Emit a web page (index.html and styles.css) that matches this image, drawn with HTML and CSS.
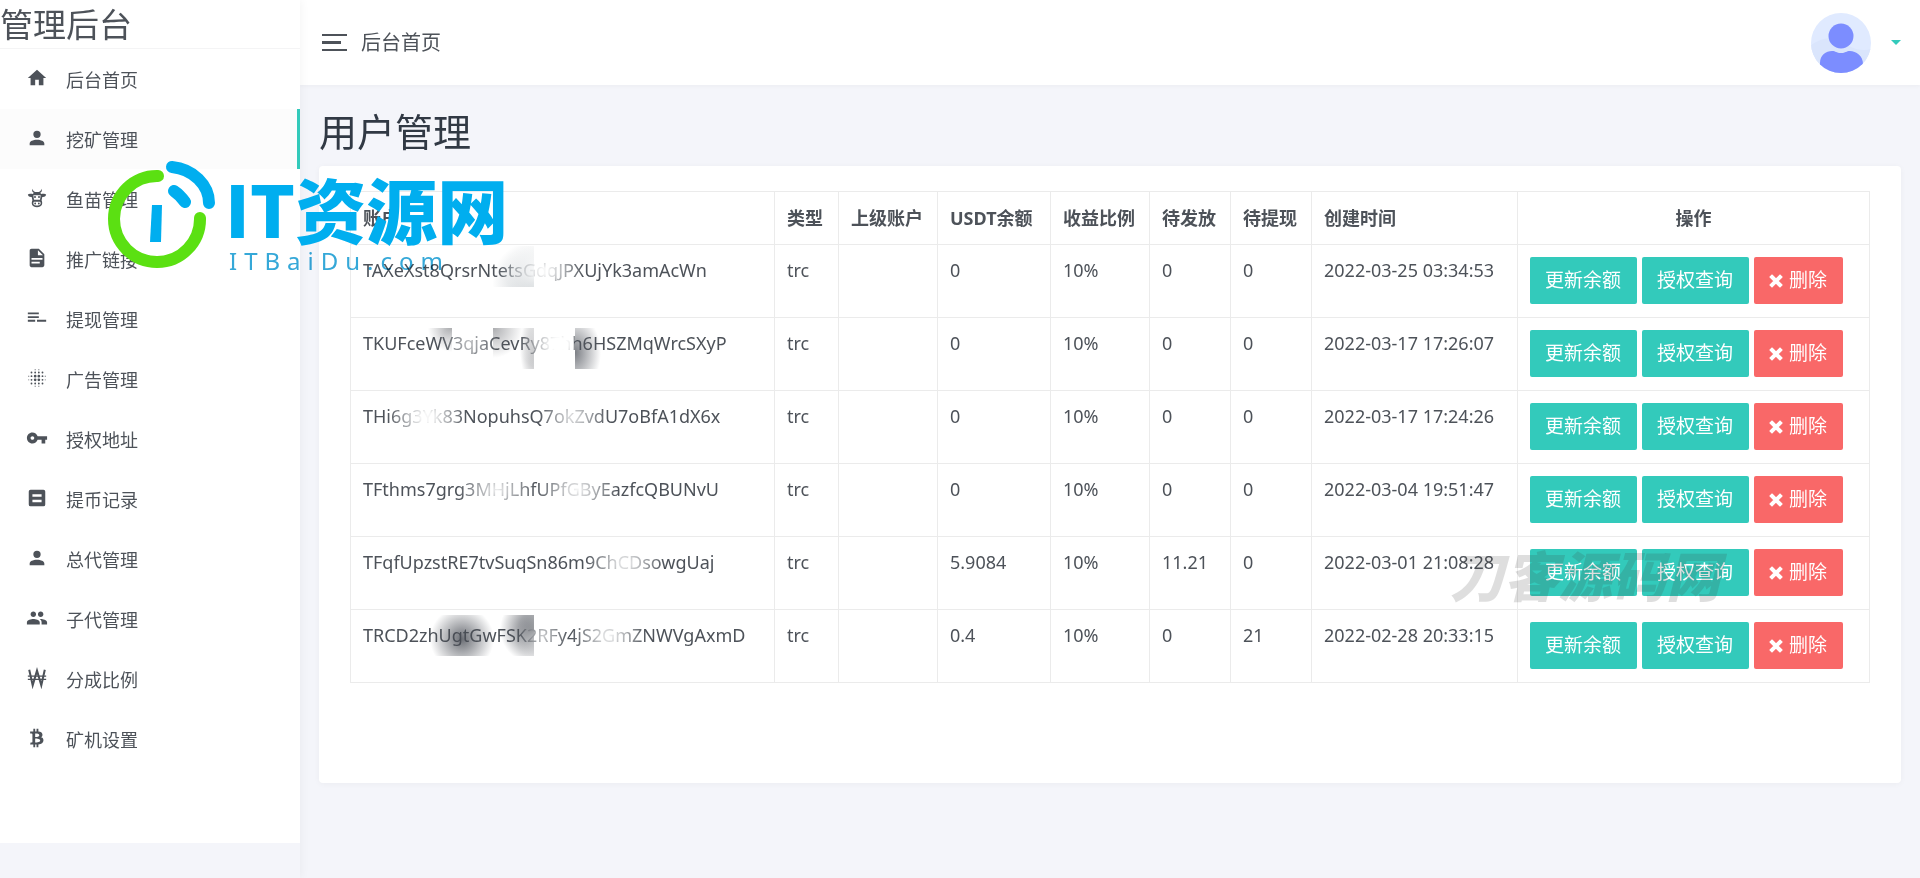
FILE: index.html
```html
<!DOCTYPE html>
<html lang="zh-CN">
<head>
<meta charset="utf-8">
<title>管理后台</title>
<link rel="stylesheet" href="styles.css">
</head>
<body>
<div class="layout">
  <aside class="sidebar">
    <div class="brand">管理后台</div>
    <nav class="menu">
      <a href="#" class="menu-item"><svg class="icon" viewBox="0 0 24 24"><path d="M10 20V14H14V20H19V12H22L12 3 2 12H5V20Z"/></svg>后台首页</a>
      <a href="#" class="menu-item active"><svg class="icon" viewBox="0 0 24 24"><path d="M12 4A4 4 0 0 1 16 8 4 4 0 0 1 12 12 4 4 0 0 1 8 8 4 4 0 0 1 12 4M12 14C16.42 14 20 15.79 20 18V20H4V18C4 15.79 7.58 14 12 14Z"/></svg>挖矿管理</a>
      <a href="#" class="menu-item"><svg class="icon" viewBox="0 0 24 24"><path fill-rule="evenodd" d="M7.200 2C6.200 4 6.800 5.600 8.400 6.400L7.600 7.600C5.400 7 3 7.200 2 8.200 2.600 10.600 4.400 11 6.200 10.800L7 14.500C5.400 18 6.400 22 12 22S18.600 18 17 14.500L17.800 10.800C19.600 11 21.400 10.600 22 8.200 21 7.200 18.600 7 16.400 7.600L15.600 6.400C17.200 5.600 17.800 4 16.800 2 16.600 4 15.600 4.800 14 5.400H10C8.400 4.800 7.400 4 7.200 2ZM8 9H16L15.300 14H8.700ZM8.600 16H15.400C17 18 15.500 20.300 12 20.300S7 18 8.600 16Z"/><circle cx="9.800" cy="11" r="1.100"/><circle cx="14.200" cy="11" r="1.100"/><circle cx="10" cy="18" r="1"/><circle cx="14" cy="18" r="1"/></svg>鱼苗管理</a>
      <a href="#" class="menu-item"><svg class="icon" viewBox="0 0 24 24"><path d="M13 9H18.500L13 3.500V9M6 2H14L20 8V20A2 2 0 0 1 18 22H6C4.890 22 4 21.100 4 20V4C4 2.890 4.890 2 6 2M15 18V16H6V18H15M18 14V12H6V14H18Z"/></svg>推广链接</a>
      <a href="#" class="menu-item"><svg class="icon" viewBox="0 0 24 24"><path d="M2 6H14V8H2ZM2 10H14V12H2ZM2 14H10V16H2ZM12 14H22V16H12Z"/></svg>提现管理</a>
      <a href="#" class="menu-item"><svg class="icon" viewBox="0 0 24 24"><path d="M14 8.500a1.500 1.500 0 1 0 0 3 1.500 1.500 0 0 0 0-3m0 4a1.500 1.500 0 1 0 0 3 1.500 1.500 0 0 0 0-3m-4 4.500a1 1 0 1 0 0 2 1 1 0 0 0 0-2m-4-4a1 1 0 1 0 0 2 1 1 0 0 0 0-2m0-4a1 1 0 1 0 0 2 1 1 0 0 0 0-2m4-4a1 1 0 1 0 0 2 1 1 0 0 0 0-2m4 0a1 1 0 1 0 0 2 1 1 0 0 0 0-2m4 4a1 1 0 1 0 0 2 1 1 0 0 0 0-2m0 4a1 1 0 1 0 0 2 1 1 0 0 0 0-2m0 4a1 1 0 1 0 0 2 1 1 0 0 0 0-2m0-12a1 1 0 1 0 0 2 1 1 0 0 0 0-2m-4 12a1 1 0 1 0 0 2 1 1 0 0 0 0-2m-4-8.500a1.500 1.500 0 1 0 0 3 1.500 1.500 0 0 0 0-3m0 4a1.500 1.500 0 1 0 0 3 1.500 1.500 0 0 0 0-3M6 5a1 1 0 1 0 0 2 1 1 0 0 0 0-2m0 12a1 1 0 1 0 0 2 1 1 0 0 0 0-2"/><path d="M9.500 2.500h1v1h-1zM13.500 2.500h1v1h-1zM9.500 20.500h1v1h-1zM13.500 20.500h1v1h-1zM2.500 9.500h1v1h-1zM2.500 13.500h1v1h-1zM20.500 9.500h1v1h-1zM20.500 13.500h1v1h-1z"/></svg>广告管理</a>
      <a href="#" class="menu-item"><svg class="icon" viewBox="0 0 24 24"><path d="M12.650 10C11.830 7.670 9.610 6 7 6c-3.310 0-6 2.690-6 6s2.690 6 6 6c2.610 0 4.830-1.670 5.650-4H17v4h4v-4h2v-4H12.650zM7 14c-1.100 0-2-.9-2-2s.9-2 2-2 2 .9 2 2-.9 2-2 2z"/></svg>授权地址</a>
      <a href="#" class="menu-item"><svg class="icon" viewBox="0 0 24 24"><path fill-rule="evenodd" d="M5 3H19A2 2 0 0 1 21 5V19A2 2 0 0 1 19 21H5A2 2 0 0 1 3 19V5A2 2 0 0 1 5 3ZM7 8V10.500H17V8ZM7 14V16.500H17V14Z"/></svg>提币记录</a>
      <a href="#" class="menu-item"><svg class="icon" viewBox="0 0 24 24"><path d="M12 4A4 4 0 0 1 16 8 4 4 0 0 1 12 12 4 4 0 0 1 8 8 4 4 0 0 1 12 4M12 14C16.420 14 20 15.790 20 18V20H4V18C4 15.790 7.580 14 12 14Z"/></svg>总代管理</a>
      <a href="#" class="menu-item"><svg class="icon" viewBox="0 0 24 24"><path d="M16 11c1.660 0 2.990-1.340 2.990-3S17.660 5 16 5c-1.660 0-3 1.340-3 3s1.340 3 3 3zm-8 0c1.660 0 2.990-1.340 2.990-3S9.660 5 8 5C6.340 5 5 6.340 5 8s1.340 3 3 3zm0 2c-2.330 0-7 1.170-7 3.500V19h14v-2.500c0-2.330-4.670-3.500-7-3.500zm8 0c-.29 0-.62.020-.97.050 1.160.84 1.970 1.970 1.970 3.450V19h6v-2.500c0-2.330-4.670-3.500-7-3.500z"/></svg>子代管理</a>
      <a href="#" class="menu-item"><svg class="icon" viewBox="0 0 24 24"><g fill="none" stroke="currentColor"><path stroke-width="2.200" d="M3.500 3 7.300 20 12 4 16.700 20 20.500 3"/><path stroke-width="1.500" d="M2 10H22M2 13.500H22"/></g></svg>分成比例</a>
      <a href="#" class="menu-item"><svg class="icon" viewBox="0 0 24 24"><path d="M4.500 5H8V2H10V5H11.500V2H13.500V5C19 5 19 11 16 11.250 20 11 21 19 13.500 19V22H11.500V19H10V22H8V19H4.500L5 17H6A1 1 0 0 0 7 16V8A1 1 0 0 0 6 7H4.500V5M10 7V11C10 11 14.500 11.250 14.500 9 14.500 6.750 10 7 10 7M10 12.500V17C10 17 15.500 17 15.500 14.750 15.500 12.500 10 12.500 10 12.500Z"/></svg>矿机设置</a>
    </nav>
  </aside>

  <div class="page">
    <header class="topbar">
      <button class="toggle" type="button" aria-label="菜单"><span class="bar"></span><span class="bar short"></span><span class="bar"></span></button>
      <span class="crumb">后台首页</span>
      <button class="user" type="button" aria-label="用户">
        <svg class="avatar" viewBox="0 0 60 60"><defs><clipPath id="disc"><circle cx="30" cy="30" r="30"/></clipPath></defs><g clip-path="url(#disc)"><path fill="#e0eaff" d="M0 0H60V60H0Z"/><path fill="#dae5fc" d="M0 32C12 24 24 22 34 30 42 37 52 38 60 36V60H0Z"/><path fill="#7c8dff" d="M9 60V50C9 42 15 38 21 38 25 38 25 40 30 40S35 38 39 38C45 38 52 43 52 51V60Z"/></g><circle cx="30" cy="23" r="12.500" fill="#7c8dff"/></svg>
        <span class="caret"></span>
      </button>
    </header>

    <main class="content">
      <h1 class="title">用户管理</h1>
      <section class="card">
        <table class="users">
          <colgroup><col class="c-account"><col class="c-type"><col class="c-parent"><col class="c-usdt"><col class="c-rate"><col class="c-wait"><col class="c-wait"><col class="c-time"><col class="c-action"></colgroup>
          <thead><tr><th>账户</th><th>类型</th><th>上级账户</th><th>USDT余额</th><th>收益比例</th><th>待发放</th><th>待提现</th><th>创建时间</th><th class="center">操作</th></tr></thead>
          <tbody>
            <tr><td class="account mask-a">TAXeXst8QrsrNtetsGdqJPXUjYk3amAcWn</td><td>trc</td><td></td><td>0</td><td>10%</td><td>0</td><td>0</td><td>2022-03-25 03:34:53</td><td><div class="actions"><button type="button" class="btn">更新余额</button><button type="button" class="btn">授权查询</button><button type="button" class="btn danger"><svg class="cross" viewBox="0 0 14 14"><path d="M3 3 11 11M11 3 3 11"/></svg>删除</button></div></td></tr>
            <tr><td class="account mask-b">TKUFceWV3qjaCevRy87hh6HSZMqWrcSXyP</td><td>trc</td><td></td><td>0</td><td>10%</td><td>0</td><td>0</td><td>2022-03-17 17:26:07</td><td><div class="actions"><button type="button" class="btn">更新余额</button><button type="button" class="btn">授权查询</button><button type="button" class="btn danger"><svg class="cross" viewBox="0 0 14 14"><path d="M3 3 11 11M11 3 3 11"/></svg>删除</button></div></td></tr>
            <tr><td class="account mask-c">THi6g3Yk83NopuhsQ7okZvdU7oBfA1dX6x</td><td>trc</td><td></td><td>0</td><td>10%</td><td>0</td><td>0</td><td>2022-03-17 17:24:26</td><td><div class="actions"><button type="button" class="btn">更新余额</button><button type="button" class="btn">授权查询</button><button type="button" class="btn danger"><svg class="cross" viewBox="0 0 14 14"><path d="M3 3 11 11M11 3 3 11"/></svg>删除</button></div></td></tr>
            <tr><td class="account mask-d">TFthms7grg3MHjLhfUPfGByEazfcQBUNvU</td><td>trc</td><td></td><td>0</td><td>10%</td><td>0</td><td>0</td><td>2022-03-04 19:51:47</td><td><div class="actions"><button type="button" class="btn">更新余额</button><button type="button" class="btn">授权查询</button><button type="button" class="btn danger"><svg class="cross" viewBox="0 0 14 14"><path d="M3 3 11 11M11 3 3 11"/></svg>删除</button></div></td></tr>
            <tr><td class="account mask-e">TFqfUpzstRE7tvSuqSn86m9ChCDsowgUaj</td><td>trc</td><td></td><td>5.9084</td><td>10%</td><td>11.21</td><td>0</td><td>2022-03-01 21:08:28</td><td><div class="actions"><button type="button" class="btn">更新余额</button><button type="button" class="btn">授权查询</button><button type="button" class="btn danger"><svg class="cross" viewBox="0 0 14 14"><path d="M3 3 11 11M11 3 3 11"/></svg>删除</button></div></td></tr>
            <tr><td class="account mask-f">TRCD2zhUgtGwFSK2RFy4jS2GmZNWVgAxmD</td><td>trc</td><td></td><td>0.4</td><td>10%</td><td>0</td><td>21</td><td>2022-02-28 20:33:15</td><td><div class="actions"><button type="button" class="btn">更新余额</button><button type="button" class="btn">授权查询</button><button type="button" class="btn danger"><svg class="cross" viewBox="0 0 14 14"><path d="M3 3 11 11M11 3 3 11"/></svg>删除</button></div></td></tr>
          </tbody>
        </table>
      </section>
    </main>
  </div>
</div>

<svg class="mark-logo" viewBox="0 0 110 110"><g fill="none" stroke-linecap="round"><path stroke="#5be012" stroke-width="12" d="M50 16A43 43 0 1 0 92 58"/><path stroke="#00aeef" stroke-width="12" d="M64 7C85 9 101 25 101 43"/><path stroke="#00aeef" stroke-width="12" d="M66 31Q72 35 77 42"/></g><path fill="#00aeef" d="M44 45H54L53 82H42Z"/></svg>
<div class="mark-name">IT资源网</div>
<div class="mark-site">ITBaiDu.com</div>
<div class="mark-right">刀客源码网</div>
</body>
</html>
```
FILE: styles.css
```css
* { box-sizing: border-box; }
body {
  margin: 0;
  background: #f4f5fa;
  color: #4d5259;
  font-family: "Noto Sans", "Noto Sans CJK SC", sans-serif;
  font-size: 18px;
  line-height: 27px;
}
button { font: inherit; border: 0; padding: 0; cursor: pointer; }
.layout { display: flex; min-height: 100vh; }

.sidebar {
  flex: 0 0 300px;
  display: flex;
  flex-direction: column;
  padding-bottom: 35px;
  box-shadow: 0 0 10px rgba(0, 0, 0, .06);
  z-index: 1;
}
.brand {
  height: 49px;
  background: #fff;
  border-bottom: 1px solid #f4f4f5;
  font-size: 33px;
  line-height: 50px;
}
.menu { flex: 1; background: #fff; }
.menu-item {
  display: flex;
  align-items: center;
  gap: 18px;
  height: 60px;
  padding: 2px 0 0 26px;
  color: #4d5259;
  text-decoration: none;
}
.menu-item.active { background: #fcfcfc; border-right: 3px solid #33cabb; }
.icon { width: 22px; height: 22px; margin-bottom: 4px; fill: currentColor; }

.page { flex: 1; min-width: 0; }
.topbar {
  display: flex;
  align-items: center;
  height: 85px;
  padding: 0 19px 0 22px;
  background: #fff;
  box-shadow: 0 1px 4px rgba(0, 0, 0, .04);
}
.toggle { display: flex; flex-direction: column; gap: 5px; width: 25px; background: none; }
.bar { height: 2px; width: 25px; background: #4d5259; }
.bar.short { width: 19px; height: 3px; }
.crumb { margin-left: 14px; font-size: 20px; }
.user { display: flex; align-items: center; gap: 20px; margin-left: auto; background: none; }
.avatar { width: 60px; height: 60px; }
.caret { border: 5px solid transparent; border-top-color: #33cabb; border-bottom: 0; }

.content { padding: 17px 19px; }
.title {
  margin: 0 0 5px;
  color: #313944;
  font-size: 38px;
  font-weight: 400;
  line-height: 59px;
}
.card {
  min-height: 617px;
  padding: 25px 31px;
  background: #fff;
  border-radius: 4px;
  box-shadow: 0 1px 6px rgba(0, 0, 0, .04);
}
.users { width: 100%; border-collapse: collapse; table-layout: fixed; }
.users th, .users td {
  border: 1px solid #ebebeb;
  padding: 12px;
  text-align: left;
  vertical-align: top;
  white-space: nowrap;
}
.users th { padding-top: 13px; font-weight: 700; }
.users .center { text-align: center; }
.c-type { width: 64px; }
.c-parent { width: 99px; }
.c-usdt { width: 113px; }
.c-rate { width: 99px; }
.c-wait { width: 81px; }
.c-time { width: 206px; }
.c-action { width: 352px; }
.actions { display: flex; gap: 5px; height: 48px; }
.btn {
  height: 47px;
  padding: 0 16px 0 15px;
  border-radius: 2px;
  background: #33cabb;
  color: #fff;
  font-size: 19px;
}
.btn.danger { display: flex; align-items: center; gap: 6px; background: #f96868; }
.cross { width: 14px; height: 14px; fill: none; stroke: #fff; stroke-width: 4; stroke-linecap: square; overflow: visible; }

.account { position: relative; }
.account::after { content: ""; position: absolute; inset: 0; background-repeat: no-repeat; }
.mask-a::after {
  background-image:
    radial-gradient(ellipse 40px 30px at 193px 26px, rgba(255, 255, 255, .95) 10%, transparent),
    radial-gradient(circle at 100% 90%, rgba(190, 196, 200, .9), transparent 42px);
  background-size: auto, 41px 41px;
  background-position: 0 0, 142px 1px;
}
.mask-b::after {
  background-image:
    radial-gradient(ellipse 28px 26px at 118px 26px, rgba(255, 255, 255, .65), transparent),
    radial-gradient(ellipse 40px 30px at 208px 26px, #fff 20%, transparent),
    radial-gradient(circle at 100% 0, rgba(90, 92, 98, .55), transparent 24px),
    radial-gradient(circle at 0 0, rgba(90, 92, 98, .5), transparent 30px),
    radial-gradient(ellipse 14px 38px at 100% 50%, rgba(90, 92, 98, .55), transparent),
    radial-gradient(ellipse 26px 38px at 0 60%, rgba(80, 84, 92, .75), transparent);
  background-size: auto, 223px 60px, 41px 41px, 41px 41px, 41px 41px, 41px 41px;
  background-position: 0 0, 0 0, 60px 10px, 142px 10px, 142px 10px, 224px 10px;
}
.mask-c::after {
  background-image:
    radial-gradient(ellipse 40px 30px at 76px 26px, rgba(255, 255, 255, .95) 15%, transparent),
    radial-gradient(ellipse 36px 30px at 222px 26px, rgba(255, 255, 255, .85), transparent);
}
.mask-d::after {
  background-image:
    radial-gradient(ellipse 40px 30px at 146px 26px, rgba(255, 255, 255, .9), transparent),
    radial-gradient(ellipse 42px 30px at 226px 26px, rgba(255, 255, 255, .95), transparent);
}
.mask-e::after {
  background-image: radial-gradient(ellipse 40px 30px at 274px 26px, rgba(255, 255, 255, .95), transparent);
}
.mask-f::after {
  background-image:
    radial-gradient(ellipse 38px 30px at 258px 26px, rgba(255, 255, 255, .95), transparent),
    radial-gradient(ellipse 26px 30px at 192px 26px, rgba(255, 255, 255, .7), transparent),
    radial-gradient(circle at 43px 24px, rgba(70, 74, 82, .8), transparent 32px),
    radial-gradient(circle at 100% 35%, rgba(70, 74, 82, .95), transparent 34px);
  background-size: auto, 182px 60px, 80px 41px, 41px 41px;
  background-size: auto, auto, 80px 41px, 41px 41px;
  background-position: 0 0, 0 0, 68px 5px, 142px 5px;
}

.mark-logo, .mark-name, .mark-site, .mark-right { position: absolute; z-index: 2; pointer-events: none; white-space: nowrap; }
.mark-logo { left: 108px; top: 160px; width: 110px; height: 110px; }
.mark-name {
  left: 225px;
  top: 172px;
  color: #00aeef;
  font-family: "Noto Sans CJK SC", sans-serif;
  font-size: 71px;
  font-weight: 900;
  line-height: 70px;
}
.mark-site {
  left: 229px;
  top: 246px;
  color: #35a8d8;
  font-size: 24px;
  line-height: 30px;
  letter-spacing: 7px;
  mix-blend-mode: multiply;
}
.mark-right {
  left: 1450px;
  top: 546px;
  color: rgba(60, 60, 60, .17);
  font-family: "Noto Sans CJK SC", sans-serif;
  font-size: 54px;
  font-style: italic;
  font-weight: 900;
  line-height: 56px;
}
```
